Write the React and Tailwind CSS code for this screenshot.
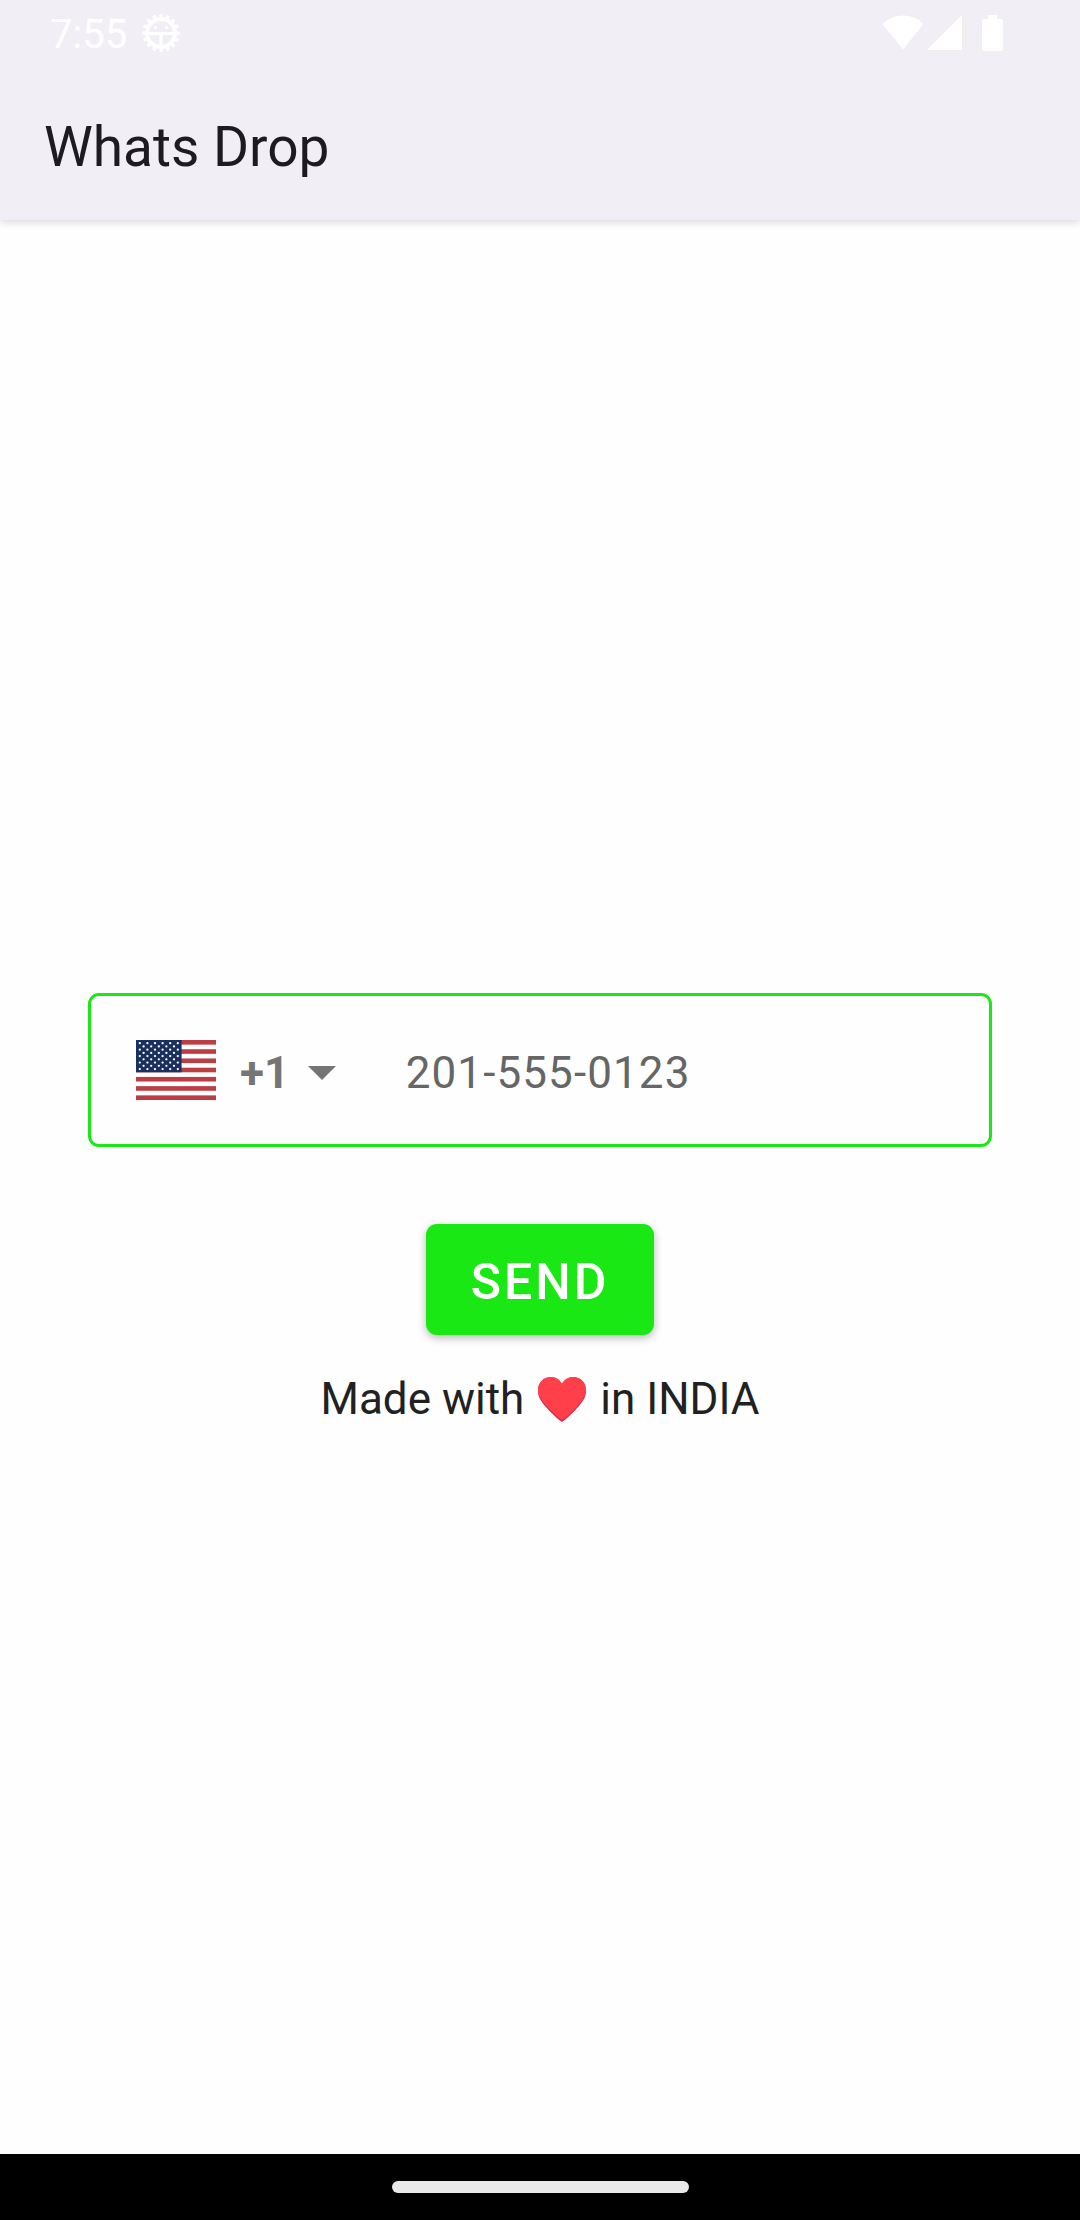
import { useState } from "react";

const GEAR_TEETH = Array.from({ length: 16 }, (_, i) => i * 22.5);
const STAR_ROWS = [0, 1, 2, 3, 4, 5, 6, 7, 8];
const RED_STRIPES = [0, 1, 2, 3, 4, 5, 6];

function DebugIcon() {
  return (
    <svg viewBox="0 0 40 40" className="size-10" fill="none" aria-hidden="true">
      <g stroke="#fff" strokeWidth="3.600" strokeLinecap="round">
        {GEAR_TEETH.map((a) => (
          <path key={a} d="M20 6V2.600" transform={`rotate(${a} 20 20)`} />
        ))}
      </g>
      <circle cx="20" cy="20" r="14" stroke="#fff" strokeWidth="4" />
      <path d="M7 20.500H33M20 20V34" stroke="#fff" strokeWidth="3" />
      <circle cx="14.500" cy="14.500" r="1.500" fill="#fff" />
      <circle cx="25.500" cy="14.500" r="1.500" fill="#fff" />
    </svg>
  );
}

function StatusBar() {
  return (
    <div className="flex h-[66px] items-center justify-between pr-[77px] pl-[50px] text-white">
      <div className="flex items-center gap-3.5">
        <span className="pt-1 text-[40px] leading-none">7:55</span>
        <DebugIcon />
      </div>
      <div className="flex items-center">
        <svg viewBox="0 0 42 36" className="h-9 w-[42px]" fill="currentColor" aria-label="Wi-Fi">
          <path d="M21 34.5 0.5 9C12 -2.5 30 -2.5 41.500 9Z" />
        </svg>
        <svg viewBox="0 0 35 36" className="ml-[3px] h-9 w-[35px]" fill="currentColor" aria-label="Signal">
          <path d="M0 35 35 0V35Z" />
        </svg>
        <svg viewBox="0 0 21 36" className="ml-5 h-9 w-[21px]" fill="currentColor" aria-label="Battery">
          <path d="M6 0H15V4H19a2 2 0 0 1 2 2V34a2 2 0 0 1-2 2H2a2 2 0 0 1-2-2V6a2 2 0 0 1 2-2H6Z" />
        </svg>
      </div>
    </div>
  );
}

function UsFlag() {
  return (
    <svg viewBox="0 0 80 60" className="h-[60px] w-20 shrink-0" role="img" aria-label="United States">
      <rect width="80" height="60" fill="#fff" />
      {RED_STRIPES.map((i) => (
        <rect key={i} y={i * 9.23} width="80" height="4.62" fill="#bd3d44" />
      ))}
      <rect width="45.600" height="32.300" fill="#192f5d" />
      {STAR_ROWS.map((row) =>
        Array.from({ length: row % 2 ? 5 : 6 }, (_, col) => (
          <circle
            key={`${row}-${col}`}
            cx={3.8 + col * 7.6 + (row % 2 ? 3.8 : 0)}
            cy={3.2 + row * 3.23}
            r="1.15"
            fill="#fff"
          />
        ))
      )}
    </svg>
  );
}

function Heart() {
  return (
    <svg viewBox="0 0 50 46" className="h-[46px] w-[50px]" role="img" aria-label="love">
      <path
        d="M25 46C22 44 14 37 8 30C3 24 1 20 1 15C1 6 7 1 14 1C19 1 23 4 25 8C27 4 31 1 36 1C43 1 49 6 49 15C49 20 47 24 42 30C36 37 28 44 25 46Z"
        fill="#e0284c"
      />
      <path
        d="M25 44C22 42 14 35 8 28C3 22 1 18 1 14C1 6 7 1 14 1C19 1 23 4 25 8C27 4 31 1 36 1C43 1 49 6 49 14C49 18 47 22 42 28C36 35 28 42 25 44Z"
        fill="#ff404b"
      />
    </svg>
  );
}

export default function App() {
  const [phone, setPhone] = useState("");
  return (
    <div className="flex min-h-screen flex-col bg-[#fefefe] font-[Roboto,sans-serif]">
      <header className="bg-[#f1eff5] shadow-[0_2px_8px_rgba(0,0,0,0.16)]">
        <StatusBar />
        <h1 className="flex h-[154px] items-center px-11 pt-2 text-[55px] leading-none text-[#1c1b1f]">Whats Drop</h1>
      </header>

      <main className="flex grow flex-col items-center justify-center px-[88px] pt-12">
        <div className="flex h-[154px] w-full items-center rounded-[11px] border-[3px] border-[#1ae815] pr-11 pl-[45px]">
          <UsFlag />
          <div className="relative ml-6 flex h-full w-[99px] items-center pt-1.5">
            <select
              aria-label="Country code"
              className="h-full w-full appearance-none bg-transparent text-[44px] font-bold text-[#757575] outline-none"
            >
              <option>+1</option>
            </select>
            <svg
              viewBox="0 0 28 14"
              className="pointer-events-none absolute right-0 h-3.5 w-7"
              fill="#757575"
              aria-hidden="true"
            >
              <path d="M0 0H28L14 14Z" />
            </svg>
          </div>
          <input
            type="tel"
            aria-label="Phone number"
            placeholder="201-555-0123"
            value={phone}
            onChange={(e) => setPhone(e.target.value)}
            className="ml-[70px] h-full min-w-0 grow bg-transparent pt-1.5 text-[44px] tracking-wide text-[#212121] outline-none placeholder:text-[#666666]"
          />
        </div>

        <button
          type="button"
          className="mt-[77px] h-[111px] rounded-[11px] bg-[#1ae815] px-[45px] pt-1.5 text-[50px] font-medium tracking-[3px] text-white shadow-[0_3px_8px_rgba(0,0,0,0.28)]"
        >
          SEND
        </button>

        <p className="mt-[34px] flex items-center gap-[13px] text-[44px] leading-[60px] text-[#212121]">
          Made with <Heart /> in INDIA
        </p>
      </main>

      <footer className="flex h-[66px] items-center justify-center bg-black">
        <div className="h-3 w-[297px] rounded-full bg-[#e9e9e9]" />
      </footer>
    </div>
  );
}
